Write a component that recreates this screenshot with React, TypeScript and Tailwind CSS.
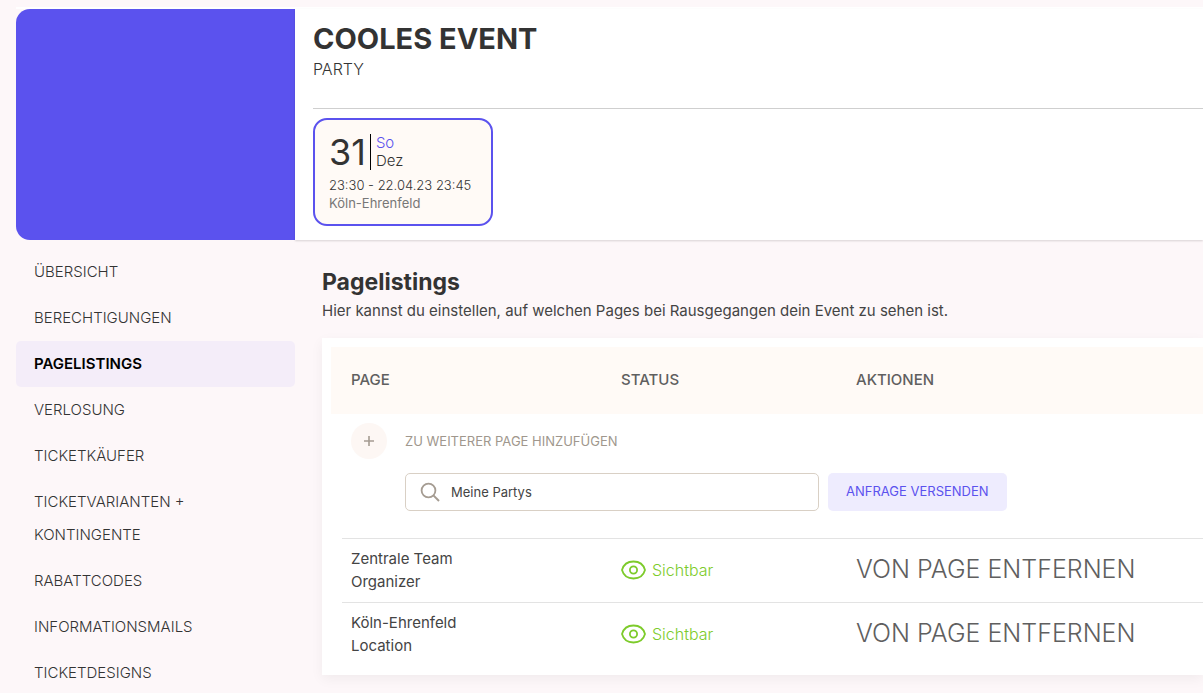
import React, { useState } from "react";

const navItems = [
  "Übersicht",
  "Berechtigungen",
  "Pagelistings",
  "Verlosung",
  "Ticketkäufer",
  "Ticketvarianten + Kontingente",
  "Rabattcodes",
  "Informationsmails",
  "Ticketdesigns",
];

const listings = [
  { name: "Zentrale Team", role: "Organizer" },
  { name: "Köln-Ehrenfeld", role: "Location" },
];

function EyeIcon() {
  return (
    <svg width="25" height="20" viewBox="0 0 25 20" fill="none" stroke="#7dcb2b" strokeWidth="1.8" aria-hidden="true">
      <path d="M1 10C2.500 4.600 7 1.500 12.500 1.500S22.500 4.600 24 10c-1.500 5.400-6 8.500-11.500 8.500S2.500 15.400 1 10Z" strokeLinejoin="round" />
      <circle cx="12.500" cy="10" r="3.600" />
    </svg>
  );
}

function SearchIcon() {
  return (
    <svg className="shrink-0" width="20" height="20" viewBox="0 0 20 20" fill="none" stroke="#a59c92" aria-hidden="true">
      <circle cx="8.500" cy="8.500" r="6.900" strokeWidth="1.800" />
      <path d="M13.400 13.400l5.600 5.600" strokeWidth="2" />
    </svg>
  );
}

function EventHeader() {
  return (
    <header className="flex border-t-2 border-white">
      <div className="w-[279px] shrink-0 rounded-l-[14px] bg-[#5b52ee]" />
      <div className="min-w-0 flex-1 bg-white pl-[18px] pt-3 pb-[14px] shadow-[0_1px_2px_rgba(0,0,0,0.15)]">
        <h1 className="text-[29px] leading-9 font-bold text-[#333333]">COOLES EVENT</h1>
        <p className="text-base leading-6 font-light">PARTY</p>
        <div className="mt-[27px] border-t border-[#cfcfcf] pt-[9px]">
          <a href="#termin" className="block w-[180px] rounded-[14px] border-2 border-[#5b52ee] bg-[#fffaf6] px-[14px] pt-[14px] pb-3">
            <div className="flex items-center">
              <span className="text-[36px] leading-9">31</span>
              <span className="ml-1 border-l border-black pl-[5px] text-[15px] leading-[18px] font-light">
                <span className="block text-[#5b52ee]">So</span>
                <span className="block">Dez</span>
              </span>
            </div>
            <p className="mt-[6px] text-[13px] leading-[18px] font-light whitespace-nowrap">23:30 - 22.04.23 23:45</p>
            <p className="text-[13px] leading-[18px] text-[#777777]">Köln-Ehrenfeld</p>
          </a>
        </div>
      </div>
    </header>
  );
}

function SideNav() {
  return (
    <nav className="w-[279px] shrink-0 pt-[9px]">
      <ul>
        {navItems.map((item) => {
          const active = item === "Pagelistings";
          return (
            <li key={item}>
              <a
                href="#"
                aria-current={active ? "page" : undefined}
                className={
                  active
                    ? "block rounded-[5px] bg-[#f4edf9] pt-[6px] pr-[100px] pb-[7px] pl-[18px] text-[15px] leading-[33px] font-semibold text-black uppercase"
                    : "block pt-[6px] pr-[100px] pb-[7px] pl-[18px] text-[15px] leading-[33px] font-light uppercase"
                }
              >
                {item}
              </a>
            </li>
          );
        })}
      </ul>
    </nav>
  );
}

function AddPage() {
  const [query, setQuery] = useState("Meine Partys");
  return (
    <div className="pt-[9px] pl-5 pb-[27px]">
      <div className="flex items-center gap-[18px]">
        <button type="button" aria-label="Page hinzufügen" className="flex size-9 items-center justify-center rounded-full bg-[#fdf7f4]">
          <svg width="12" height="12" viewBox="0 0 12 12" stroke="#a59c92" strokeWidth="1.600" aria-hidden="true">
            <path d="M6 1v10M1 6h10" />
          </svg>
        </button>
        <label htmlFor="page-search" className="text-[13px] leading-5 text-[#a0978d] uppercase">
          Zu weiterer Page hinzufügen
        </label>
      </div>
      <div className="mt-[14px] flex gap-[9px] pl-[54px]">
        <div className="flex h-[38px] w-full max-w-[414px] items-center gap-[11px] rounded-[5px] border border-[#d9d0c5] bg-white px-[14px]">
          <SearchIcon />
          <input
            id="page-search"
            type="text"
            value={query}
            onChange={(e) => setQuery(e.target.value)}
            className="min-w-0 flex-1 bg-transparent text-[13px] leading-5 text-[#444444] outline-none"
          />
        </div>
        <button type="button" className="h-[38px] shrink-0 rounded-[5px] bg-[#eeecfe] px-[18px] text-[13px] text-[#5b52ee]">
          ANFRAGE VERSENDEN
        </button>
      </div>
    </div>
  );
}

function Listings() {
  return (
    <section className="min-w-0 flex-1 pt-7 pl-[27px]">
      <h2 className="text-[23px] leading-7 font-bold text-[#333333]">Pagelistings</h2>
      <p className="mt-[3px] text-[15px] leading-6 text-[#444444]">
        Hier kannst du einstellen, auf welchen Pages bei Rausgegangen dein Event zu sehen ist.
      </p>
      <div className="mt-[15px] bg-white py-[9px] pl-[9px] shadow-[0_4px_12px_rgba(0,0,0,0.05)]">
        <table className="w-full table-fixed border-separate border-spacing-0 text-left">
          <thead>
            <tr className="h-[67px] bg-[#fffaf6] text-[15px] text-[#5f5f5f]">
              <th scope="col" className="w-[290px] p-0 pl-5 font-medium">PAGE</th>
              <th scope="col" className="w-[235px] p-0 font-medium">STATUS</th>
              <th scope="col" className="p-0 font-medium">AKTIONEN</th>
            </tr>
          </thead>
          <tbody>
            <tr>
              <td colSpan={3} className="p-0">
                <AddPage />
              </td>
            </tr>
            {listings.map((row) => (
              <tr key={row.name}>
                <td className="p-0 pl-[11px]">
                  <div className="h-16 border-t border-[#e3e3e3] pt-2 pl-[9px] text-[15px] leading-[23px] text-[#444444]">
                    {row.name}
                    <br />
                    {row.role}
                  </div>
                </td>
                <td className="border-t border-[#e3e3e3] p-0 pb-[2px] text-base font-light text-[#7dcb2b]">
                  <span className="flex items-center gap-[6px]">
                    <EyeIcon />
                    Sichtbar
                  </span>
                </td>
                <td className="border-t border-[#e3e3e3] p-0 pb-1">
                  <button type="button" className="block text-[25px] leading-8 font-light text-[#5f5f5f] uppercase">
                    Von Page entfernen
                  </button>
                </td>
              </tr>
            ))}
          </tbody>
        </table>
      </div>
    </section>
  );
}

export default function App() {
  return (
    <div className="min-h-screen bg-[#fdf7f9] pt-[7px] pl-4 font-['Inter',sans-serif] text-[#333333]">
      <EventHeader />
      <main className="flex">
        <SideNav />
        <Listings />
      </main>
    </div>
  );
}
